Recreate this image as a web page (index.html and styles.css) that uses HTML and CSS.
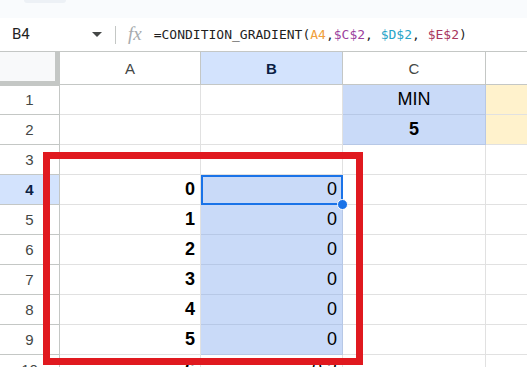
FILE: index.html
```html
<!doctype html>
<html lang="en">

<head>
    <meta charset="UTF-8">
    <link rel="stylesheet" href="styles.css">
    <title>CONDITION_GRADIENT</title>
</head>

<body>
    <div class="topstrip">
        <div class="tab"></div>
    </div>
    <div class="formulabar">
        <div class="namebox">
            <span class="ref">B4</span>
            <span class="caret"></span>
        </div>
        <span class="sep"></span>
        <span class="fx">fx</span>
        <span class="formula">=CONDITION_GRADIENT(<span class="c-a4">A4</span>,<span class="c-c2">$C$2</span>, <span class="c-d2">$D$2</span>, <span class="c-e2">$E$2</span>)</span>
    </div>
    <div class="sheet">
        <div class="corner"></div>
        <div class="colhead">A</div>
        <div class="colhead active">B</div>
        <div class="colhead">C</div>
        <div class="colhead"></div>

        <div class="rowhead">1</div>
        <div class="cell"></div>
        <div class="cell"></div>
        <div class="cell blue center">MIN</div>
        <div class="cell yellow"></div>

        <div class="rowhead">2</div>
        <div class="cell"></div>
        <div class="cell"></div>
        <div class="cell blue center bold">5</div>
        <div class="cell yellow"></div>

        <div class="rowhead">3</div>
        <div class="cell"></div>
        <div class="cell"></div>
        <div class="cell"></div>
        <div class="cell"></div>

        <div class="rowhead active">4</div>
        <div class="cell bold">0</div>
        <div class="cell blue selected">0<span class="handle"></span></div>
        <div class="cell"></div>
        <div class="cell"></div>

        <div class="rowhead">5</div>
        <div class="cell bold">1</div>
        <div class="cell blue">0</div>
        <div class="cell"></div>
        <div class="cell"></div>

        <div class="rowhead">6</div>
        <div class="cell bold">2</div>
        <div class="cell blue">0</div>
        <div class="cell"></div>
        <div class="cell"></div>

        <div class="rowhead">7</div>
        <div class="cell bold">3</div>
        <div class="cell blue">0</div>
        <div class="cell"></div>
        <div class="cell"></div>

        <div class="rowhead">8</div>
        <div class="cell bold">4</div>
        <div class="cell blue">0</div>
        <div class="cell"></div>
        <div class="cell"></div>

        <div class="rowhead">9</div>
        <div class="cell bold">5</div>
        <div class="cell blue">0</div>
        <div class="cell"></div>
        <div class="cell"></div>

        <div class="rowhead">10</div>
        <div class="cell bold">6</div>
        <div class="cell">0.2</div>
        <div class="cell"></div>
        <div class="cell"></div>

        <div class="highlight"></div>
    </div>
</body>

</html>
```

FILE: styles.css
```css
* {
    box-sizing: border-box;
}

body {
    margin: 0;
    height: 367px;
    overflow: hidden;
    background: #ffffff;
    font-family: Roboto, "Liberation Sans", sans-serif;
}

/* strip left over from the toolbar above */
.topstrip {
    height: 18px;
    background: #f9fbfd;
    padding-left: 24px;
}

.tab {
    width: 42px;
    height: 3px;
    background: #edf1f6;
    border-radius: 0 0 6px 6px;
}

.formulabar {
    height: 34px;
    display: flex;
    align-items: center;
    border-bottom: 1px solid #c4c7c5;
    background: #ffffff;
}

.namebox {
    width: 108px;
    display: flex;
    align-items: center;
    justify-content: space-between;
    padding-left: 12px;
    padding-right: 6px;
    margin-top: -1px;
}

.ref {
    font-size: 15px;
    color: #1f1f1f;
}

.caret {
    width: 0;
    height: 0;
    border-left: 5px solid transparent;
    border-right: 5px solid transparent;
    border-top: 5px solid #444746;
}

.sep {
    width: 1px;
    height: 18px;
    background: #c4c7c5;
    margin-left: 7px;
    margin-right: 12px;
}

.fx {
    font-family: "Liberation Serif", serif;
    font-style: italic;
    font-size: 19px;
    color: #a8abae;
    margin-right: 12px;
    margin-top: -2px;
}

.formula {
    font-family: "DejaVu Sans Mono", monospace;
    font-size: 13px;
    color: #1f1f1f;
}

.c-a4 { color: #f0a03c; }
.c-c2 { color: #9b3f9e; }
.c-d2 { color: #27a4c8; }
.c-e2 { color: #a8365e; }

.sheet {
    position: relative;
    display: grid;
    grid-template-columns: 60px 141px 142px 143px 120px;
    grid-template-rows: 33px repeat(10, 30px);
    font-family: "Liberation Sans", Arial, sans-serif;
}

.corner {
    background: #f8f9fa;
    border-right: 5px solid #c4c7c5;
    border-bottom: 5px solid #c4c7c5;
    margin-bottom: -1px;
}

.colhead {
    display: flex;
    align-items: center;
    justify-content: center;
    font-size: 15px;
    color: #444746;
    border-right: 1px solid #c4c7c5;
    border-bottom: 1px solid #c4c7c5;
}

.colhead.active {
    background: #d3e3fd;
    color: #0b1f44;
    font-weight: bold;
}

.rowhead {
    display: flex;
    align-items: center;
    justify-content: center;
    font-size: 15px;
    color: #444746;
    border-right: 1px solid #c4c7c5;
    border-bottom: 1px solid #c4c7c5;
}

.rowhead.active {
    background: #d3e3fd;
    color: #0b1f44;
    font-weight: bold;
}

.cell {
    position: relative;
    display: flex;
    align-items: center;
    justify-content: flex-end;
    padding-right: 5px;
    font-size: 18px;
    color: #000000;
    border-right: 1px solid #e1e1e1;
    border-bottom: 1px solid #e1e1e1;
}

.cell.center {
    justify-content: center;
    padding-right: 0;
}

.cell.bold {
    font-weight: bold;
}

.cell.blue {
    background: #c9daf8;
    border-color: #b7c8e6;
}

.cell.yellow {
    background: #fff2cc;
}

.cell.selected {
    outline: 2px solid #1a73e8;
    outline-offset: -2px;
}

.handle {
    position: absolute;
    right: -6px;
    bottom: -6px;
    width: 11px;
    height: 11px;
    border-radius: 50%;
    background: #1a73e8;
    border: 1px solid #ffffff;
    z-index: 2;
}

/* red box drawn over rows 3-10 */
.highlight {
    position: absolute;
    left: 43px;
    top: 100px;
    width: 320px;
    height: 213px;
    border: 7px solid #e0191f;
    z-index: 3;
}
```
